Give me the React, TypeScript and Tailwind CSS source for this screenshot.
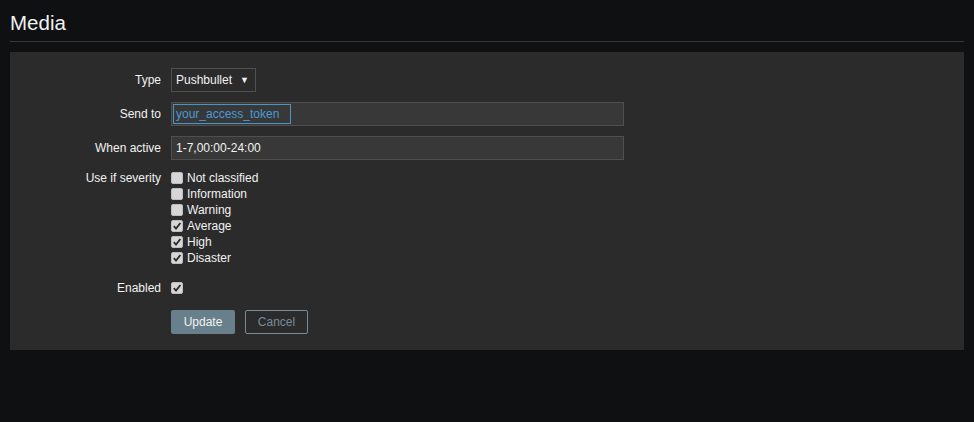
import React from "react";

const font = { fontFamily: '"Liberation Sans", Arial, sans-serif' };

function Check({ checked }: { checked: boolean }) {
  return (
    <span className="flex h-[12px] w-[12px] shrink-0 items-center justify-center rounded-[2px] border border-[#bdbdbd] bg-[#d6d6d6]">
      {checked && (
        <svg width="10" height="10" viewBox="0 0 10 10">
          <path d="M1.8 5.2 L4 7.6 L8.4 2" fill="none" stroke="#2a2a2a" strokeWidth="1.8" />
        </svg>
      )}
    </span>
  );
}

function Row({ label, children, className = "" }: { label: string; children: React.ReactNode; className?: string }) {
  return (
    <div className={"flex " + className}>
      <div className="w-[161px] shrink-0 pr-[10px] text-right">{label}</div>
      <div className="flex-1">{children}</div>
    </div>
  );
}

export default function App() {
  const sev: [string, boolean][] = [
    ["Not classified", false],
    ["Information", false],
    ["Warning", false],
    ["Average", true],
    ["High", true],
    ["Disaster", true],
  ];
  return (
    <div className="min-h-[422px] w-full bg-[#0e1012] px-[10px] text-[12px] leading-[16px] text-[#f2f2f2]" style={font}>
      <div className="border-b border-[#383838] pt-[11px] pb-[6px] text-[20.5px] leading-[24px] text-[#f2f2f2]">Media</div>
      <div className="mt-[10px] flex flex-col gap-[10px] bg-[#2b2b2b] pt-[16px] pb-[16px]">
        <Row label="Type" className="items-center h-[24px]">
          <div className="flex h-[24px] w-[85px] items-center justify-between border border-[#4f4f4f] bg-[#2b2b2b] pl-[4px] pr-[6px]">
            <span>Pushbullet</span>
            <span className="text-[9px]">▼</span>
          </div>
        </Row>
        <Row label="Send to" className="items-center h-[24px]">
          <div className="flex h-[24px] w-[453px] items-center border border-[#4f4f4f] bg-[#383838] pl-[1px]">
            <span className="flex h-[20px] w-[118px] items-center border border-[#4796c4] pl-[2px] text-[#4a9ad6]">your_access_token</span>
          </div>
        </Row>
        <Row label="When active" className="items-center h-[24px]">
          <div className="flex h-[24px] w-[453px] items-center border border-[#4f4f4f] bg-[#383838] pl-[4px]">
            1-7,00:00-24:00
          </div>
        </Row>
        <Row label="Use if severity" className="items-start">
          <div className="flex flex-col">
            {sev.map(([n, c]) => (
              <div key={n} className="flex h-[16px] items-center gap-[4px]">
                <Check checked={c} />
                <span>{n}</span>
              </div>
            ))}
          </div>
        </Row>
        <Row label="Enabled" className="items-center h-[24px]">
          <div className="flex h-[24px] items-center">
            <Check checked />
          </div>
        </Row>
        <Row label="" className="h-[24px]">
          <div className="flex gap-[10px]">
            <button className="h-[24px] w-[64px] rounded-[2px] bg-[#687f8c] text-[12px] text-[#f2f2f2]">Update</button>
            <button className="h-[24px] w-[63px] rounded-[2px] border border-[#768d99] bg-transparent text-[12px] text-[#768d99]">Cancel</button>
          </div>
        </Row>
      </div>
    </div>
  );
}
